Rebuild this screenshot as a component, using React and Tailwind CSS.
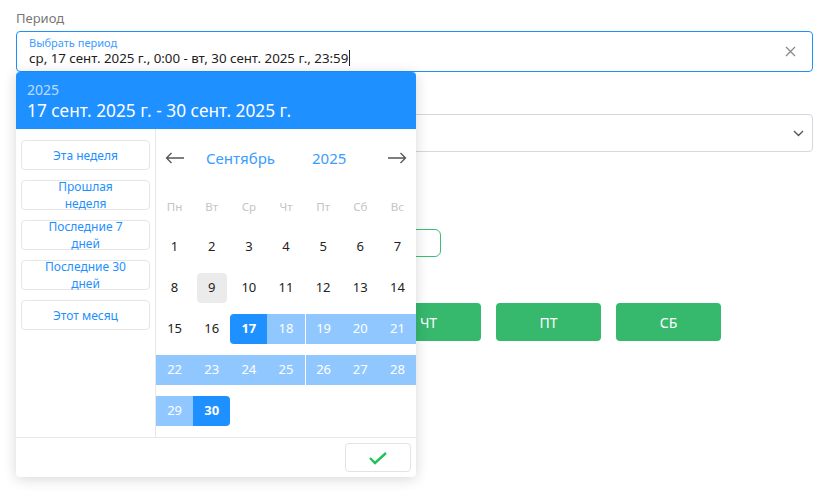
import React from 'react';

const font = { fontFamily: '"Noto Sans", "Open Sans", sans-serif' };

const presets = ['Эта неделя', 'Прошлая неделя', 'Последние 7 дней', 'Последние 30 дней', 'Этот месяц'];
const weekdays = ['Пн', 'Вт', 'Ср', 'Чт', 'Пт', 'Сб', 'Вс'];
const days = ['ПН', 'ВТ', 'СР', 'ЧТ', 'ПТ', 'СБ'];

const ArrowLeft = () => (
  <svg width="20" height="12" viewBox="0 0 20 12" fill="none" stroke="#555" strokeWidth="1.3">
    <path d="M19 6H1.5M6.5 1L1.5 6l5 5" />
  </svg>
);

const ArrowRight = () => (
  <svg width="20" height="12" viewBox="0 0 20 12" fill="none" stroke="#555" strokeWidth="1.3">
    <path d="M1 6h17.5M13.5 1l5 5-5 5" />
  </svg>
);

const dayCell = (d) => {
  let cls = 'h-[30px] flex items-center justify-center text-[13px] text-[#222]';
  let inner = d;
  if (d === 17) cls = 'h-[30px] flex items-center justify-center text-[13px] font-bold text-white bg-[#1e90ff] rounded-l-[4px]';
  else if (d === 30) cls = 'h-[30px] flex items-center justify-center text-[13px] font-bold text-white bg-[#1e90ff] rounded-r-[4px]';
  else if (d > 17 && d < 30) cls = 'h-[30px] flex items-center justify-center text-[13px] text-white bg-[#90c7ff]';
  if (d === 19 || d === 26) cls += ' border-l border-white';
  if (d === 9)
    inner = <span className="w-[30px] h-[30px] rounded-[4px] bg-[#ebebeb] flex items-center justify-center">9</span>;
  return (
    <div key={d} className={cls}>
      {inner}
    </div>
  );
};

export default function App() {
  const cells = [];
  for (let i = 1; i <= 30; i++) cells.push(i);

  return (
    <div className="relative w-[823px] h-[496px] bg-white overflow-hidden" style={font}>
      <div className="pl-4 pr-[10px] pt-[10px]">
        <div className="text-[13px] leading-[16px] text-[#777] mb-[5px]">Период</div>
        <div className="h-[41px] border border-[#1e90ff] rounded-[4px] flex items-center pl-3 pr-4">
          <div className="flex-1 flex flex-col">
            <span className="text-[11px] leading-[13px] text-[#3b9cff]">Выбрать период</span>
            <span className="text-[13.3px] leading-[18px] text-[#222] flex items-center">
              ср, 17 сент. 2025 г., 0:00 - вт, 30 сент. 2025 г., 23:59
              <span className="inline-block w-px h-[16px] bg-[#222] ml-px" />
            </span>
          </div>
          <svg width="11" height="11" viewBox="0 0 11 11" stroke="#8a8a8a" strokeWidth="1.3">
            <path d="M1 1l9 9M10 1l-9 9" />
          </svg>
        </div>

        <div className="mt-[42px] h-[38px] border border-[#d6d6de] rounded-[4px] flex items-center justify-end pr-[8px]">
          <svg width="11" height="7" viewBox="0 0 11 7" fill="none" stroke="#555" strokeWidth="1.4">
            <path d="M1 1l4.5 4.5L10 1" />
          </svg>
        </div>

        <div className="mt-[77px] w-[425px] h-[28px] border border-[#3cbf73] rounded-[6px]" />

        <div className="mt-[46px] flex gap-[15px]">
          {days.map((d) => (
            <div
              key={d}
              className="w-[105px] h-[38px] rounded-[4px] bg-[#36b86d] text-white text-[14px] flex items-center justify-center"
            >
              {d}
            </div>
          ))}
        </div>
      </div>

      <div className="absolute left-4 top-[72px] w-[400px] h-[405px] bg-white rounded-[4px] shadow-[0_2px_14px_rgba(0,0,0,0.16)] flex flex-col overflow-hidden">
        <div className="h-[57px] bg-[#1e90ff] px-[11px] pt-[9px]">
          <div className="text-[14px] leading-[18px] text-white/70">2025</div>
          <div className="text-[17.3px] leading-[24px] text-white">17 сент. 2025 г. - 30 сент. 2025 г.</div>
        </div>
        <div className="flex h-[308px]">
          <div className="w-[140px] border-r border-[#e8e8e8] px-[5px] pt-[11px] flex flex-col gap-[10px]">
            {presets.map((p) => (
              <div
                key={p}
                className="h-[30px] border border-[#e6e6e6] rounded-[4px] flex items-center justify-center text-center text-[12px] leading-[17px] text-[#1e90ff] px-5"
              >
                {p}
              </div>
            ))}
          </div>
          <div className="w-[260px] flex flex-col">
            <div className="h-[58px] flex items-center px-[9px]">
              <ArrowLeft />
              <span className="ml-[21px] text-[15px] text-[#3b9cff]">Сентябрь</span>
              <span className="ml-[37px] text-[15px] text-[#3b9cff]">2025</span>
              <span className="flex-1" />
              <ArrowRight />
            </div>
            <div className="mt-[5px] grid grid-cols-7 h-[30px] items-center">
              {weekdays.map((w) => (
                <div key={w} className="text-center text-[11.5px] text-[#c4c4c4]">
                  {w}
                </div>
              ))}
            </div>
            <div className="mt-[10px] grid grid-cols-7 gap-y-[11px]">{cells.map(dayCell)}</div>
          </div>
        </div>
        <div className="h-[40px] border-t border-[#e8e8e8] flex items-start justify-end pt-[5px] pr-[5px]">
          <div className="w-[66px] h-[29px] border border-[#e3e3e3] rounded-[4px] flex items-center justify-center">
            <svg width="20" height="14" viewBox="0 0 20 14" fill="none" stroke="#1fc35b" strokeWidth="2.4">
              <path d="M2 7l5 5L18 2" />
            </svg>
          </div>
        </div>
      </div>
    </div>
  );
}
